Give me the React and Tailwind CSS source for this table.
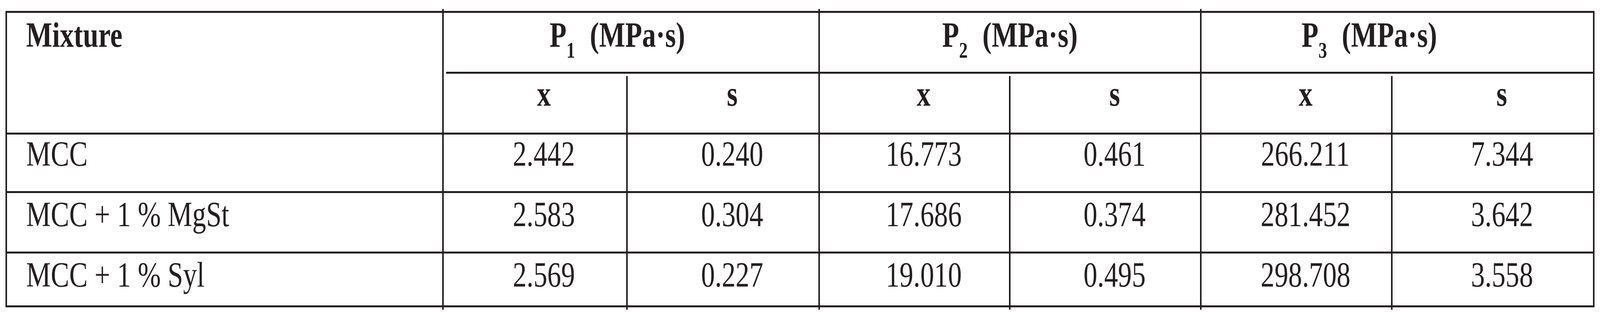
import React, { useState, useEffect } from "react";

// column tracks follow the widths of the printed table
const cols = "grid-cols-[1421fr_599fr_626fr_621fr_622fr_622fr_652fr]";

const rows = [
  { name: "MCC", vals: ["2.442", "0.240", "16.773", "0.461", "266.211", "7.344"], pt: "pt-[5px]" },
  { name: "MCC + 1 % MgSt", vals: ["2.583", "0.304", "17.686", "0.374", "281.452", "3.642"], pt: "pt-[10px]" },
  { name: "MCC + 1 % Syl", vals: ["2.569", "0.227", "19.010", "0.495", "298.708", "3.558"], pt: "pt-[10px]" },
];

// the table was set for a 5209px wide page; squeeze glyphs horizontally when the window is narrower
function useSqueeze() {
  const [k, setK] = useState(() => Math.min(1, window.innerWidth / 5209));
  useEffect(() => {
    const onResize = () => setK(Math.min(1, window.innerWidth / 5209));
    window.addEventListener("resize", onResize);
    return () => window.removeEventListener("resize", onResize);
  }, []);
  return k;
}

function Txt({ k, left, children }) {
  return (
    <span
      className={`inline-block whitespace-nowrap ${left ? "origin-left" : "origin-center"}`}
      style={{ transform: `scaleX(${k})` }}
    >
      {children}
    </span>
  );
}

function PHead({ k, n, pad, last }) {
  return (
    <div
      className={`col-span-2 pt-[12px] text-center font-bold ${pad} ${
        last ? "" : "border-r-[4px] border-[#231f20]"
      }`}
    >
      <Txt k={k}>
        P<sub className="bottom-0 text-[56px] leading-none align-[-28px]">{n}</sub>
        <span className="ml-[48px]">(MPa·s)</span>
      </Txt>
    </div>
  );
}

function SubHead({ k, label, first, hasSubLine, last }) {
  return (
    <div
      className={`flex flex-col ${
        hasSubLine || last ? "" : "border-r-[4px] border-[#231f20]"
      }`}
    >
      <div className={`h-[5px] bg-[#231f20] ${first ? "ml-[6px]" : ""}`} />
      <div className="flex flex-1">
        <div className="flex-1 pt-[7px] pl-[1.15vw] text-center font-bold">
          <Txt k={k}>{label}</Txt>
        </div>
        {hasSubLine && <div className="mt-[6px] w-[4px] bg-[#231f20]" />}
      </div>
    </div>
  );
}

export default function App() {
  const k = useSqueeze();

  return (
    <div className="w-full h-[800px] bg-white pt-[23px] px-[0.35vw] font-['Liberation_Serif','Times_New_Roman',serif] text-[90px] leading-[90px] text-[#231f20]">
      {/* ticks above the top rule */}
      <div className={`grid ${cols} h-[5px] px-[4px]`}>
        <div className="border-r-[4px] border-[#231f20]" />
        <div className="col-span-2 border-r-[4px] border-[#231f20]" />
        <div className="col-span-2 border-r-[4px] border-[#231f20]" />
        <div className="col-span-2" />
      </div>

      <div
        className={`grid ${cols} grid-rows-[151px_156px_150px_155px_138px] border-y-[5px] border-x-[4px] border-[#231f20]`}
      >
        <div className="row-span-2 border-r-[4px] border-[#231f20] pl-[1.19vw] pt-[12px] font-bold">
          <Txt k={k} left>Mixture</Txt>
        </div>
        <PHead k={k} n="1" pad="pr-[1.7vw]" />
        <PHead k={k} n="2" pad="" />
        <PHead k={k} n="3" pad="pr-[3.5vw]" last />

        <SubHead k={k} label="x" first hasSubLine />
        <SubHead k={k} label="s" />
        <SubHead k={k} label="x" hasSubLine />
        <SubHead k={k} label="s" />
        <SubHead k={k} label="x" hasSubLine />
        <SubHead k={k} label="s" last />

        {rows.map((r) => (
          <React.Fragment key={r.name}>
            <div className={`border-t-[5px] border-r-[4px] border-[#231f20] pl-[1.19vw] ${r.pt}`}>
              <Txt k={k} left>{r.name}</Txt>
            </div>
            {r.vals.map((v, i) => (
              <div
                key={i}
                className={`border-t-[5px] border-[#231f20] pl-[1.15vw] text-center ${r.pt} ${
                  i === 5 ? "" : "border-r-[4px]"
                }`}
              >
                <Txt k={k}>{v}</Txt>
              </div>
            ))}
          </React.Fragment>
        ))}
      </div>

      {/* ticks below the bottom rule */}
      <div className={`grid ${cols} h-[6px] px-[4px]`}>
        <div className="border-r-[4px] border-[#231f20]" />
        <div className="border-r-[4px] border-[#231f20]" />
        <div className="border-r-[4px] border-[#231f20]" />
        <div className="border-r-[4px] border-[#231f20]" />
        <div className="border-r-[4px] border-[#231f20]" />
        <div className="border-r-[4px] border-[#231f20]" />
        <div />
      </div>
    </div>
  );
}
